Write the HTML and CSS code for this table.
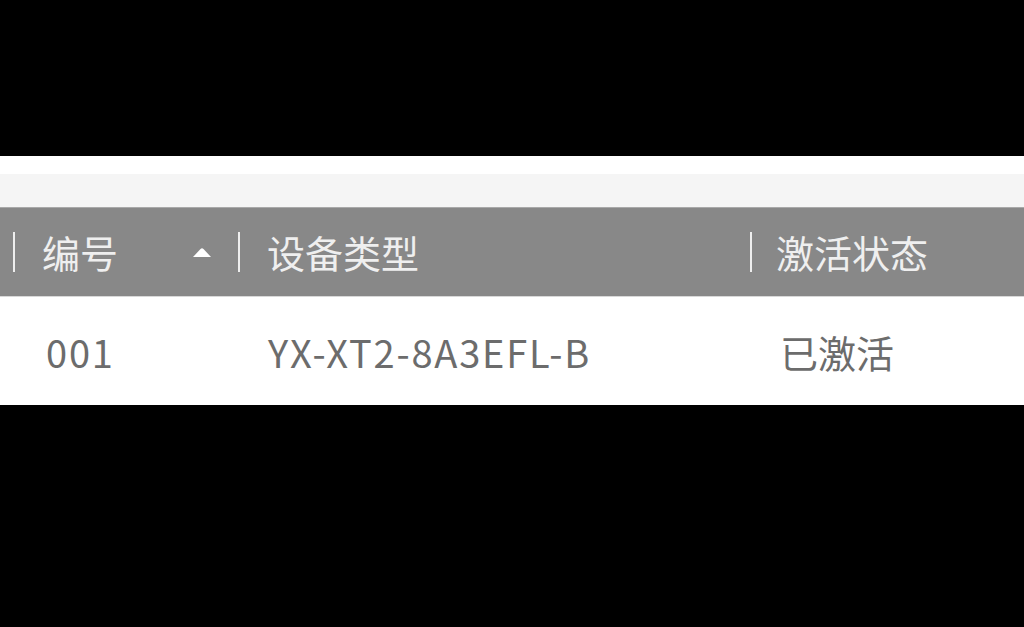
FILE: index.html
```html
<!DOCTYPE html>
<html lang="zh">
<head>
<meta charset="utf-8">
<title>设备列表</title>
<link rel="stylesheet" href="styles.css">
</head>
<body>
<div class="top-black"></div>
<div class="panel">
  <div class="band-white"></div>
  <div class="band-gray"></div>
  <div class="table">
    <div class="thead">
      <div class="th th-first">
        <span class="sep"></span>
        <span class="th-text">编号</span>
        <svg class="sort" width="20" height="11" viewBox="0 0 20 11"><path d="M1 10 L8.5 2 Q10 0.5 11.5 2 L19 10 Z" fill="#ffffff"/></svg>
      </div>
      <div class="th">
        <span class="sep"></span>
        <span class="th-text">设备类型</span>
      </div>
      <div class="th th-last">
        <span class="sep"></span>
        <span class="th-text">激活状态</span>
      </div>
    </div>
    <div class="tr">
      <div class="td td-first td-latin">001</div>
      <div class="td td-latin">YX-XT2-8A3EFL-B</div>
      <div class="td">已激活</div>
    </div>
  </div>
</div>
</body>
</html>
```

FILE: styles.css
```css
html, body {
  margin: 0;
  padding: 0;
  background: #000;
  width: 1024px;
  height: 627px;
  overflow: hidden;
  font-family: "Noto Sans CJK SC", "Noto Sans", sans-serif;
}
.top-black {
  height: 156px;
}
.panel {
  background: #ffffff;
}
.band-white {
  height: 18px;
  background: #ffffff;
}
.band-gray {
  height: 33px;
  background: #f5f5f5;
  border-bottom: 1px solid #a9a9a9;
}
.thead {
  display: grid;
  grid-template-columns: 238px 512px 1fr;
  height: 88px;
  background: #888888;
  border-bottom: 1px solid #d8d8d8;
}
.th {
  display: flex;
  align-items: center;
  gap: 27px;
  color: #efefef;
  font-size: 38px;
}
.th-first {
  padding-left: 13px;
}
.th-last {
  gap: 24px;
}
.sep {
  width: 2px;
  height: 40px;
  background: #eeeeee;
  flex: none;
}
.th-text {
  line-height: 1;
}
.sort {
  margin-left: auto;
  margin-right: 26px;
}
.tr {
  display: grid;
  grid-template-columns: 238px 512px 1fr;
  height: 108px;
  background: #ffffff;
}
.td {
  display: flex;
  align-items: center;
  padding-left: 30px;
  color: #6c6c6c;
  font-size: 38px;
}
.td-latin {
  letter-spacing: 1.8px;
}
.td-first {
  padding-left: 46px;
}
```
